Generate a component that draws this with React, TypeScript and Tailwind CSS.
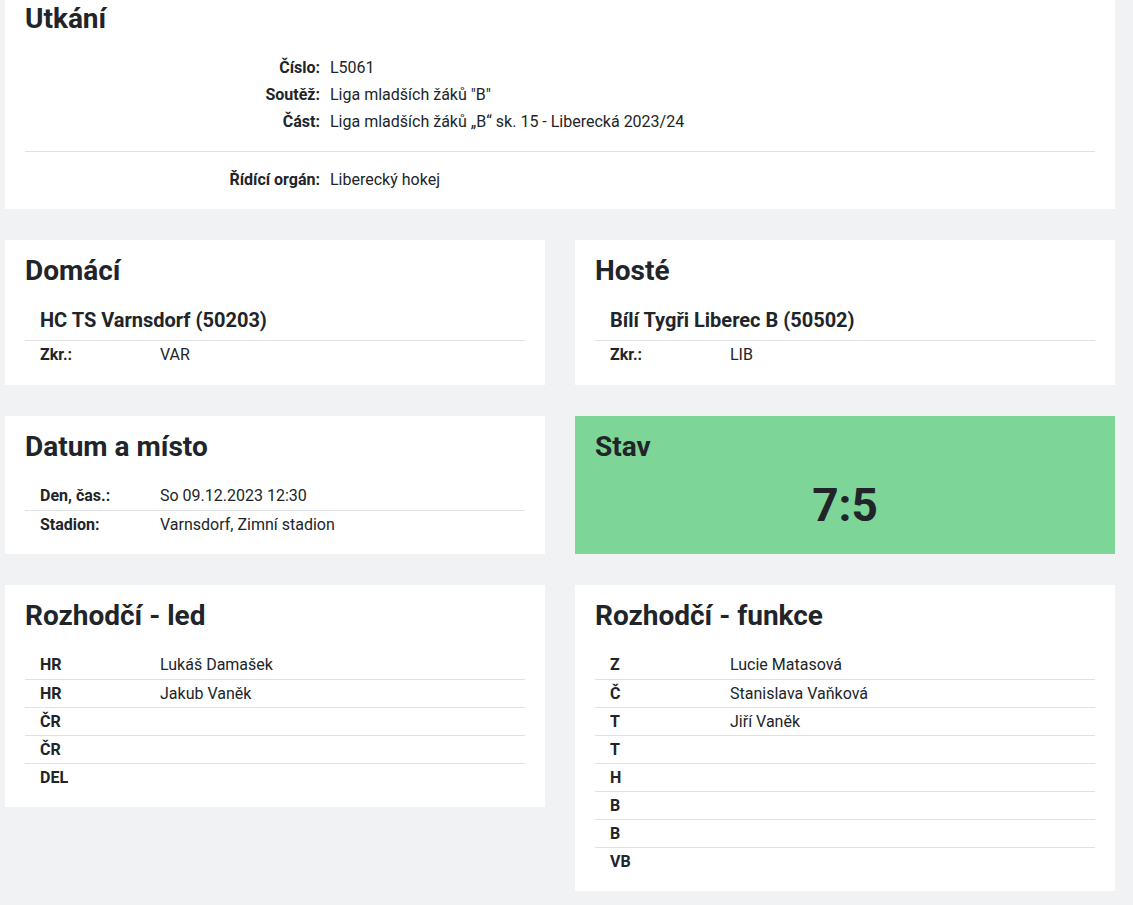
type Row = { label: string; value?: string };

const rozhodciLed: Row[] = [
  { label: "HR", value: "Lukáš Damašek" },
  { label: "HR", value: "Jakub Vaněk" },
  { label: "ČR" },
  { label: "ČR" },
  { label: "DEL" },
];

const rozhodciFunkce: Row[] = [
  { label: "Z", value: "Lucie Matasová" },
  { label: "Č", value: "Stanislava Vaňková" },
  { label: "T", value: "Jiří Vaněk" },
  { label: "T" },
  { label: "H" },
  { label: "B" },
  { label: "B" },
  { label: "VB" },
];

function Card({ title, children, green }: { title: string; children: React.ReactNode; green?: boolean }) {
  return (
    <div className={`px-5 pt-[15px] pb-4 ${green ? "bg-[#7dd598] h-full" : "bg-white"}`}>
      <h2 className="text-[28px] leading-8 font-bold">{title}</h2>
      {children}
    </div>
  );
}

// simple two column table, lines between rows
function Table({ rows }: { rows: Row[] }) {
  return (
    <div className="mt-[19px]">
      {rows.map((r, i) => (
        <div
          key={i}
          className={`grid grid-cols-[135px_1fr] h-7 items-center ${
            i > 0 ? "border-t border-[#dee2e6]" : ""
          }`}
        >
          <div className="pl-[15px] font-bold">{r.label}</div>
          <div>{r.value}</div>
        </div>
      ))}
    </div>
  );
}

function Team({ title, name, zkr }: { title: string; name: string; zkr: string }) {
  return (
    <Card title={title}>
      <div className="mt-[15px] pt-[6px] pb-2 pl-[15px] text-[20px] leading-6 font-bold border-b border-[#dee2e6]">
        {name}
      </div>
      <div className="grid grid-cols-[135px_1fr] h-7 items-center">
        <div className="pl-[15px] font-bold">Zkr.:</div>
        <div>{zkr}</div>
      </div>
    </Card>
  );
}

export default function App() {
  return (
    <div className="min-h-screen bg-[#f1f2f4] pl-[5px] pr-[18px] pb-4 text-[16px] text-[#212529] font-['Roboto',sans-serif]">
      {/* UTKANI */}
      <div className="bg-white px-5 pt-[3px] pb-4">
        <h2 className="text-[28px] leading-8 font-bold">Utkání</h2>
        <div className="mt-[19px] grid grid-cols-[295px_1fr] gap-x-[10px] leading-[27px]">
          <div className="text-right font-bold">Číslo:</div>
          <div>L5061</div>
          <div className="text-right font-bold">Soutěž:</div>
          <div>Liga mladších žáků "B"</div>
          <div className="text-right font-bold">Část:</div>
          <div>Liga mladších žáků „B“ sk. 15 - Liberecká 2023/24</div>
        </div>
        <hr className="mt-4 mb-[14px] border-[#dee2e6]" />
        <div className="grid grid-cols-[295px_1fr] gap-x-[10px] leading-[27px]">
          <div className="text-right font-bold">Řídící orgán:</div>
          <div>Liberecký hokej</div>
        </div>
      </div>

      <div className="mt-[31px] grid grid-cols-2 gap-x-[30px] gap-y-[31px]">
        <Team title="Domácí" name="HC TS Varnsdorf (50203)" zkr="VAR" />
        <Team title="Hosté" name="Bílí Tygři Liberec B (50502)" zkr="LIB" />

        <Card title="Datum a místo">
          <div className="mt-[19px]">
            <div className="grid grid-cols-[135px_1fr] h-7 items-center">
              <div className="pl-[15px] font-bold">Den, čas.:</div>
              <div>So 09.12.2023 12:30</div>
            </div>
            <div className="grid grid-cols-[135px_1fr] h-7 items-center border-t border-[#dee2e6]">
              <div className="pl-[15px] font-bold">Stadion:</div>
              <div>Varnsdorf, Zimní stadion</div>
            </div>
          </div>
        </Card>
        <Card title="Stav" green>
          <div className="text-center text-[46px] leading-[56px] font-bold mt-[14px]">7:5</div>
        </Card>

        <div className="self-start">
          <Card title="Rozhodčí - led">
            <Table rows={rozhodciLed} />
          </Card>
        </div>
        <Card title="Rozhodčí - funkce">
          <Table rows={rozhodciFunkce} />
        </Card>
      </div>
    </div>
  );
}
